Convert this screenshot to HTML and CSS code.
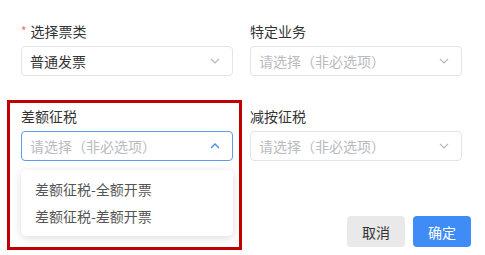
FILE: index.html
```html
<!DOCTYPE html>
<html lang="zh-CN">
<head>
    <meta charset="UTF-8">
    <meta name="viewport" content="width=device-width, initial-scale=1.0">
    <title>开票设置</title>
    <link rel="stylesheet" href="styles.css">
</head>
<body>

    <div class="dialog">
        <!-- 表单 -->
        <div class="form">
            <div class="field">
                <label class="label"><span class="required">*</span>选择票类</label>
                <div class="select">
                    <span class="value">普通发票</span>
                    <svg class="arrow" viewBox="0 0 10 6" width="10" height="6"><path d="M1 1 L5 5 L9 1" fill="none" stroke="currentColor" stroke-width="1.2"/></svg>
                </div>
            </div>

            <div class="field">
                <label class="label">特定业务</label>
                <div class="select">
                    <span class="placeholder">请选择（非必选项）</span>
                    <svg class="arrow" viewBox="0 0 10 6" width="10" height="6"><path d="M1 1 L5 5 L9 1" fill="none" stroke="currentColor" stroke-width="1.2"/></svg>
                </div>
            </div>

            <div class="field">
                <label class="label">差额征税</label>
                <div class="select is-open">
                    <span class="placeholder">请选择（非必选项）</span>
                    <svg class="arrow" viewBox="0 0 10 6" width="10" height="6"><path d="M1 5 L5 1 L9 5" fill="none" stroke="currentColor" stroke-width="1.4"/></svg>
                </div>
                <!-- 下拉选项 -->
                <ul class="dropdown">
                    <li>差额征税-全额开票</li>
                    <li>差额征税-差额开票</li>
                </ul>
            </div>

            <div class="field">
                <label class="label">减按征税</label>
                <div class="select">
                    <span class="placeholder">请选择（非必选项）</span>
                    <svg class="arrow" viewBox="0 0 10 6" width="10" height="6"><path d="M1 1 L5 5 L9 1" fill="none" stroke="currentColor" stroke-width="1.2"/></svg>
                </div>
            </div>
        </div>

        <div class="footer">
            <button class="btn btn-cancel">取消</button>
            <button class="btn btn-primary">确定</button>
        </div>

        <!-- 标注框 -->
        <div class="highlight"></div>
    </div>

</body>
</html>
```

FILE: styles.css
```css
/* Estilos generales */
* {
    box-sizing: border-box;
}

body {
    font-family: "Noto Sans CJK SC", "Noto Sans", sans-serif;
    margin: 0;
    padding: 0;
    background-color: #fff;
    color: #333;
}

.dialog {
    position: relative;
    width: 485px;
    height: 255px;
    padding: 23px 14px 0 21px;
}

.form {
    display: grid;
    grid-template-columns: 212px 212px;
    column-gap: 17px;
    row-gap: 32px;
}

.field {
    position: relative;
}

.label {
    display: block;
    height: 16px;
    line-height: 16px;
    font-size: 14px;
    color: #333;
    margin-bottom: 7px;
}

.required {
    color: #f56c6c;
    font-size: 12px;
    margin-right: 4px;
    vertical-align: top;
}

.select {
    display: flex;
    align-items: center;
    justify-content: space-between;
    height: 30px;
    padding: 0 12px 0 8px;
    border: 1px solid #e2e4e8;
    border-radius: 4px;
    font-size: 14px;
}

.select .arrow {
    color: #b4b8bf;
}

.select.is-open {
    border-color: #5b9cf2;
}

.select.is-open .arrow {
    color: #4a8cf0;
}

.value {
    color: #333;
}

.placeholder {
    color: #b8bbc1;
}

.dropdown {
    position: absolute;
    left: 0;
    top: 62px;
    z-index: 2;
    width: 212px;
    margin: 0;
    padding: 6px 0;
    list-style: none;
    background-color: #fff;
    border-radius: 5px;
    box-shadow: 0 2px 10px rgba(0, 0, 0, 0.14);
}

.dropdown li {
    height: 27px;
    line-height: 27px;
    padding-left: 14px;
    font-size: 14px;
    color: #555;
}

.footer {
    display: flex;
    justify-content: flex-end;
    gap: 8px;
    margin-top: 55px;
}

.btn {
    width: 58px;
    height: 31px;
    border: none;
    border-radius: 4px;
    font-family: inherit;
    font-size: 14px;
    cursor: pointer;
}

.btn-cancel {
    background-color: #e9e9e9;
    color: #333;
}

.btn-primary {
    background-color: #3f8cf6;
    color: #fff;
}

.highlight {
    position: absolute;
    left: 7px;
    top: 100px;
    width: 235px;
    height: 150px;
    border: 3px solid #c00000;
    pointer-events: none;
}
```
